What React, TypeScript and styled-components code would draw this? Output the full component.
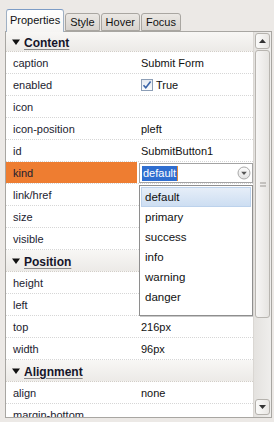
import styled, { createGlobalStyle } from "styled-components";

const GlobalStyle = createGlobalStyle`
  body {
    margin: 0;
    background: #ece9e6;
    font-family: "Liberation Sans", Arial, sans-serif;
    font-size: 11px;
    color: #1c1c30;
  }
`;

const Frame = styled.div`
  width: 267px;
  padding: 9px 0 0 5px;
`;

const TabBar = styled.div`
  display: flex;
  align-items: flex-end;
  height: 22px;
  gap: 1px;
  position: relative;
  z-index: 1;
  padding-left: 1px;
`;

const Tab = styled.div<{ $active?: boolean }>`
  box-sizing: border-box;
  height: ${(p) => (p.$active ? 23 : 18)}px;
  margin-bottom: ${(p) => (p.$active ? -1 : 0)}px;
  padding: 0 ${(p) => (p.$active ? 3 : 4)}px;
  display: flex;
  align-items: center;
  padding-bottom: ${(p) => (p.$active ? 2 : 0)}px;
  font-size: 11px;
  color: #111;
  border: 1px solid ${(p) => (p.$active ? "#9fb0c4" : "#a9a6a1")};
  border-top-color: ${(p) => (p.$active ? "#7c9cc6" : "#a9a6a1")};
  border-bottom: ${(p) => (p.$active ? "none" : "1px solid #a9a6a1")};
  border-radius: 3px 3px 0 0;
  background: ${(p) =>
    p.$active
      ? "linear-gradient(#ffffff, #f6f5f3)"
      : "linear-gradient(#ebe8e4, #d7d3ce)"};
`;

const Panel = styled.div`
  box-sizing: border-box;
  height: 387px;
  border: 1px solid #a8a6a2;
  background: #fff;
  display: flex;
`;

const Grid = styled.div`
  width: 247px;
  overflow: hidden;
`;

const Section = styled.div<{ $first?: boolean }>`
  box-sizing: border-box;
  height: ${(p) => (p.$first ? 20 : 22)}px;
  display: flex;
  align-items: center;
  gap: 4px;
  padding: 2px 0 0 6px;
  background: linear-gradient(#f8f7f5, #eceae7);
  border-bottom: 1px dotted #d2cec8;
  font-size: 12px;
  font-weight: bold;
  color: #15152a;

  span {
    text-decoration: underline;
    text-decoration-color: #8a8a8a;
    text-underline-offset: 2px;
  }
`;

const Row = styled.div`
  box-sizing: border-box;
  height: 22px;
  display: grid;
  grid-template-columns: 131px 116px;
  border-bottom: 1px dotted #d6d6d6;
`;

const Name = styled.div<{ $selected?: boolean }>`
  display: flex;
  align-items: center;
  padding-left: 7px;
  background: ${(p) => (p.$selected ? "#ee7d31" : "transparent")};
  color: #1c1c30;
`;

const Value = styled.div`
  position: relative;
  display: flex;
  align-items: center;
  gap: 3px;
  padding-left: 4px;
  color: #111;
`;

const Check = styled.div`
  box-sizing: border-box;
  width: 12px;
  height: 12px;
  border: 1px solid #8c9eb6;
  background: linear-gradient(#e4e9f0, #fbfcfd);
  display: flex;
  align-items: center;
  justify-content: center;
`;

const Select = styled.div`
  box-sizing: border-box;
  position: absolute;
  left: 2px;
  top: 1px;
  width: 114px;
  height: 20px;
  border: 1px solid #a3a3a3;
  background: #fff;
  display: flex;
  align-items: center;
  justify-content: space-between;
  padding: 0 1px 0 2px;
`;

const Selected = styled.span`
  background: #2f6ed0;
  color: #fff;
  padding: 1px 1px 2px;
  border-right: 1px solid #e08a3a;
`;

const List = styled.div`
  box-sizing: border-box;
  position: absolute;
  left: 2px;
  top: 23px;
  width: 114px;
  height: 131px;
  z-index: 2;
  background: #fff;
  border: 1px solid #8e8e8e;
  box-shadow: 1px 1px 0 #c9c9c9;
  padding: 1px 1px 0;
`;

const Item = styled.div<{ $hover?: boolean }>`
  box-sizing: border-box;
  height: 20px;
  display: flex;
  align-items: center;
  padding-left: 3px;
  color: #111;
  font-size: 11.5px;
  border: 1px solid ${(p) => (p.$hover ? "#bcd2ec" : "transparent")};
  background: ${(p) =>
    p.$hover ? "linear-gradient(#e6eef8, #cddef2)" : "transparent"};
`;

const Scrollbar = styled.div`
  width: 18px;
  display: flex;
  flex-direction: column;
  background: linear-gradient(90deg, #e4e2df, #efeeec);
  border-left: 1px solid #dad7d3;
  box-sizing: border-box;
  padding: 1px 1px 2px;
`;

const ScrollButton = styled.div`
  box-sizing: border-box;
  height: 16px;
  border: 1px solid #b5b2ad;
  border-radius: 3px;
  background: linear-gradient(90deg, #fbfbfa, #e9e7e4);
  display: flex;
  align-items: center;
  justify-content: center;
`;

const Thumb = styled.div`
  box-sizing: border-box;
  height: 268px;
  margin-top: 1px;
  border: 1px solid #b8b5b0;
  border-radius: 3px;
  background: linear-gradient(90deg, #f7f6f5, #e6e4e1);
  display: flex;
  align-items: center;
  justify-content: center;
`;

const Spacer = styled.div`
  flex: 1;
`;

const Triangle = () => (
  <svg width="8" height="7" viewBox="0 0 8 7">
    <path d="M0 0.5h8L4 6z" fill="#111" />
  </svg>
);

const DropIcon = () => (
  <svg width="14" height="14" viewBox="0 0 14 14">
    <defs>
      <linearGradient id="dg" x1="0" y1="0" x2="0" y2="1">
        <stop offset="0" stopColor="#fdfdfd" />
        <stop offset="1" stopColor="#e2e2e2" />
      </linearGradient>
    </defs>
    <circle cx="7" cy="7" r="6" fill="url(#dg)" stroke="#a9a9a9" />
    <path d="M4.2 5.8h5.6L7 9z" fill="#555" />
  </svg>
);

const rows1: [string, string][] = [
  ["caption", "Submit Form"],
  ["enabled", "True"],
  ["icon", ""],
  ["icon-position", "pleft"],
  ["id", "SubmitButton1"],
  ["kind", ""],
  ["link/href", ""],
  ["size", ""],
  ["visible", ""],
];

const rows2: [string, string][] = [
  ["height", ""],
  ["left", ""],
  ["top", "216px"],
  ["width", "96px"],
];

const rows3: [string, string][] = [
  ["align", "none"],
  ["margin-bottom", ""],
];

const options = ["default", "primary", "success", "info", "warning", "danger"];

function PropRow({ name, value }: { name: string; value: string }) {
  if (name === "enabled") {
    return (
      <Row>
        <Name>{name}</Name>
        <Value>
          <Check>
            <svg width="10" height="10" viewBox="0 0 10 10">
              <path d="M1.5 5.2l2.3 2.6L8.6 1.6" fill="none" stroke="#3a64a8" strokeWidth="1.6" />
            </svg>
          </Check>
          {value}
        </Value>
      </Row>
    );
  }
  if (name === "kind") {
    return (
      <Row>
        <Name $selected>{name}</Name>
        <Value>
          <Select>
            <Selected>default</Selected>
            <DropIcon />
          </Select>
          <List>
            {options.map((o, i) => (
              <Item key={o} $hover={i === 0}>
                {o}
              </Item>
            ))}
          </List>
        </Value>
      </Row>
    );
  }
  return (
    <Row>
      <Name>{name}</Name>
      <Value>{value}</Value>
    </Row>
  );
}

export default function App() {
  return (
    <>
      <GlobalStyle />
      <Frame>
        <TabBar>
          <Tab $active>Properties</Tab>
          <Tab>Style</Tab>
          <Tab>Hover</Tab>
          <Tab>Focus</Tab>
        </TabBar>
        <Panel>
          <Grid>
            <Section $first>
              <Triangle />
              <span>Content</span>
            </Section>
            {rows1.map(([n, v]) => (
              <PropRow key={n} name={n} value={v} />
            ))}
            <Section>
              <Triangle />
              <span>Position</span>
            </Section>
            {rows2.map(([n, v]) => (
              <PropRow key={n} name={n} value={v} />
            ))}
            <Section>
              <Triangle />
              <span>Alignment</span>
            </Section>
            {rows3.map(([n, v]) => (
              <PropRow key={n} name={n} value={v} />
            ))}
          </Grid>
          <Scrollbar>
            <ScrollButton>
              <svg width="7" height="4" viewBox="0 0 7 4">
                <path d="M0 4L3.5 0L7 4z" fill="#333" />
              </svg>
            </ScrollButton>
            <Thumb>
              <svg width="6" height="5" viewBox="0 0 6 5">
                <path d="M0 1h6M0 4h6" stroke="#9a9793" strokeWidth="1" />
              </svg>
            </Thumb>
            <Spacer />
            <ScrollButton>
              <svg width="7" height="4" viewBox="0 0 7 4">
                <path d="M0 0L3.5 4L7 0z" fill="#333" />
              </svg>
            </ScrollButton>
          </Scrollbar>
        </Panel>
      </Frame>
    </>
  );
}
